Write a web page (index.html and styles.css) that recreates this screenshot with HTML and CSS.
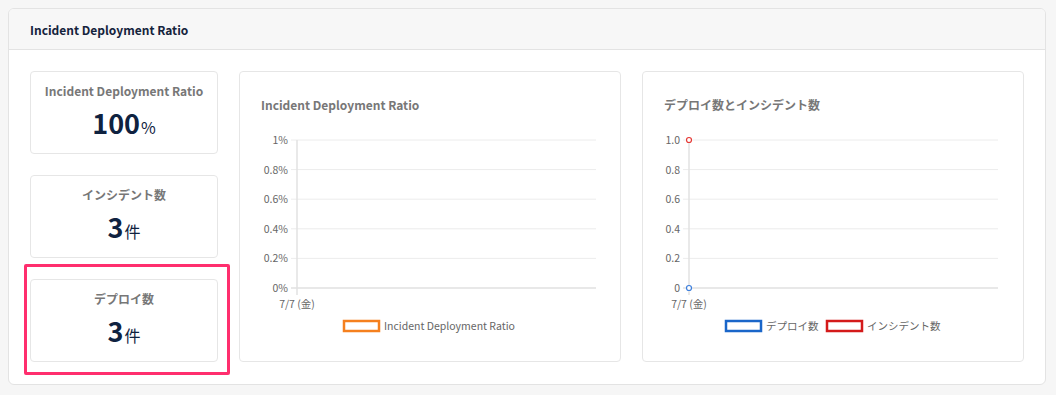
FILE: index.html
```html
<!DOCTYPE html>
<html lang="ja">
<head>
  <meta charset="UTF-8" />
  <meta name="viewport" content="width=device-width, initial-scale=1.0" />
  <title>Incident Deployment Ratio</title>
  <link rel="stylesheet" href="styles.css">
</head>
<body>

<div class="panel">
  <div class="panel-header">Incident Deployment Ratio</div>
  <div class="panel-body">

    <div class="stats">
      <div class="stat">
        <div class="stat-title">Incident Deployment Ratio</div>
        <div class="stat-value">100<span class="unit">%</span></div>
      </div>
      <div class="stat">
        <div class="stat-title">インシデント数</div>
        <div class="stat-value">3<span class="unit">件</span></div>
      </div>
      <div class="stat highlighted">
        <div class="stat-title">デプロイ数</div>
        <div class="stat-value">3<span class="unit">件</span></div>
        <div class="highlight"></div>
      </div>
    </div>

    <div class="chart-card">
      <div class="chart-title">Incident Deployment Ratio</div>
      <svg class="chart" width="338" height="215" viewBox="0 0 338 215">
        <g class="grid">
          <line x1="30" y1="14" x2="335" y2="14" />
          <line x1="30" y1="43.6" x2="335" y2="43.6" />
          <line x1="30" y1="73.2" x2="335" y2="73.2" />
          <line x1="30" y1="102.8" x2="335" y2="102.8" />
          <line x1="30" y1="132.4" x2="335" y2="132.4" />
          <line class="base" x1="30" y1="162" x2="335" y2="162" />
          <line class="axis" x1="36" y1="14" x2="36" y2="169" />
        </g>
        <g class="ylabels">
          <text x="27" y="18">1%</text>
          <text x="27" y="47.6">0.8%</text>
          <text x="27" y="77.2">0.6%</text>
          <text x="27" y="106.8">0.4%</text>
          <text x="27" y="136.4">0.2%</text>
          <text x="27" y="166">0%</text>
        </g>
        <text class="xlabel" x="36" y="182">7/7 (金)</text>
        <rect class="legend-box orange" x="83" y="195" width="35" height="10" />
        <text class="legend" x="123" y="204">Incident Deployment Ratio</text>
      </svg>
    </div>

    <div class="chart-card">
      <div class="chart-title">デプロイ数とインシデント数</div>
      <svg class="chart" width="338" height="215" viewBox="0 0 338 215">
        <g class="grid">
          <line x1="19" y1="14" x2="334" y2="14" />
          <line x1="19" y1="43.6" x2="334" y2="43.6" />
          <line x1="19" y1="73.2" x2="334" y2="73.2" />
          <line x1="19" y1="102.8" x2="334" y2="102.8" />
          <line x1="19" y1="132.4" x2="334" y2="132.4" />
          <line class="base" x1="19" y1="162" x2="334" y2="162" />
          <line class="axis" x1="25" y1="14" x2="25" y2="169" />
        </g>
        <g class="ylabels">
          <text x="16" y="18">1.0</text>
          <text x="16" y="47.6">0.8</text>
          <text x="16" y="77.2">0.6</text>
          <text x="16" y="106.8">0.4</text>
          <text x="16" y="136.4">0.2</text>
          <text x="16" y="166">0</text>
        </g>
        <circle class="point red" cx="25" cy="14" r="2.5" />
        <circle class="point blue" cx="25" cy="162" r="2.5" />
        <text class="xlabel" x="25" y="182">7/7 (金)</text>
        <rect class="legend-box blue" x="62" y="195" width="35" height="10" />
        <text class="legend" x="102" y="204">デプロイ数</text>
        <rect class="legend-box red" x="163" y="195" width="35" height="10" />
        <text class="legend" x="203" y="204">インシデント数</text>
      </svg>
    </div>

  </div>
</div>

</body>
</html>
```

FILE: styles.css
```css
* { box-sizing: border-box; }
body {
  margin: 0;
  padding: 8px;
  background: #f6f6f6;
  font-family: "Noto Sans CJK JP", "Noto Sans", sans-serif;
  color: #222;
}
.panel {
  width: 1038px;
  background: #fff;
  border: 1px solid #e3e3e3;
  border-radius: 6px;
  overflow: hidden;
}
.panel-header {
  height: 41px;
  line-height: 41px;
  padding: 0 21px;
  background: #f7f7f7;
  border-bottom: 1px solid #e3e3e3;
  font-size: 12px;
  font-weight: bold;
  color: #14233c;
}
.panel-body {
  display: flex;
  gap: 21px;
  padding: 21px 21px 22px 21px;
}
.stats {
  display: flex;
  flex-direction: column;
  gap: 21px;
  width: 188px;
}
.stat {
  position: relative;
  height: 83px;
  border: 1px solid #e6e6e6;
  border-radius: 4px;
  text-align: center;
  padding-top: 9px;
}
.stat-title {
  font-size: 12px;
  font-weight: bold;
  color: #777;
  line-height: 20px;
}
.stat-value {
  margin-top: 4px;
  font-size: 27px;
  font-weight: bold;
  color: #0f2240;
  line-height: 36px;
}
.unit {
  font-size: 16px;
  font-weight: normal;
  margin-left: 1px;
}
.highlight {
  position: absolute;
  top: -16px;
  bottom: -14px;
  left: -7px;
  right: -13px;
  border: 3px solid #ff2e6e;
  border-radius: 2px;
}
.chart-card {
  width: 382px;
  height: 291px;
  border: 1px solid #e6e6e6;
  border-radius: 4px;
  padding: 23px 21px 0 21px;
}
.chart-title {
  font-size: 12px;
  font-weight: bold;
  color: #777;
  line-height: 20px;
}
.chart {
  display: block;
  margin-top: 11px;
  overflow: visible;
}
.grid line {
  stroke: #ececec;
  stroke-width: 1;
}
.grid line.base {
  stroke: #e0e0e0;
  stroke-width: 1.5;
}
.grid line.axis {
  stroke: #e2e2e2;
  stroke-width: 1.5;
}
.ylabels text {
  font-size: 10.5px;
  fill: #666;
  text-anchor: end;
}
.xlabel {
  font-size: 10.5px;
  fill: #666;
  text-anchor: middle;
}
.legend {
  font-size: 10.5px;
  fill: #666;
}
.legend-box {
  fill: #fff;
  stroke-width: 2.5;
}
.legend-box.orange { stroke: #f5801e; }
.legend-box.blue { stroke: #1a66c9; }
.legend-box.red { stroke: #d41a1a; }
.point {
  fill: #fff;
  stroke-width: 1.2;
}
.point.red { stroke: #e53935; }
.point.blue { stroke: #3d7fdc; }
```
